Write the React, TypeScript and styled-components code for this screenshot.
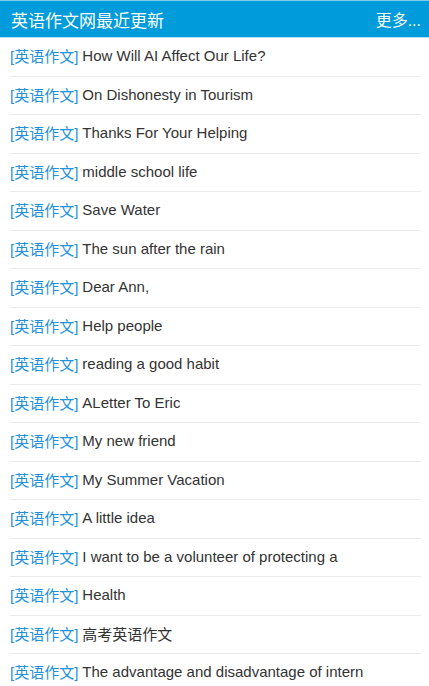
import styled, { createGlobalStyle } from 'styled-components';

const GlobalStyle = createGlobalStyle`
  html, body {
    margin: 0;
    padding: 0;
    background: #ffffff;
  }
  body {
    font-family: "Liberation Sans", "Noto Sans CJK SC", Arial, sans-serif;
  }
`;

const Page = styled.div`
  width: 429px;
  background: #ffffff;
`;

const Header = styled.div`
  display: flex;
  align-items: center;
  justify-content: space-between;
  height: 36px;
  padding: 0 8px 0 11px;
  background: #009bdb;
  border-top: 1px solid #7fcbee;
  border-bottom: 1px solid #b5e0f4;
  color: #ffffff;
`;

const Title = styled.h2`
  margin: 0;
  font-size: 17px;
  font-weight: normal;
`;

const More = styled.a`
  font-size: 16px;
  color: #ffffff;
  text-decoration: none;
`;

const List = styled.ul`
  list-style: none;
  margin: 0;
  padding: 0 8px 0 10px;
`;

const Item = styled.li`
  display: flex;
  align-items: center;
  box-sizing: border-box;
  height: 38.5px;
  padding-bottom: 2px;
  border-bottom: 1px solid #ececec;
  font-size: 15px;
  white-space: nowrap;
  overflow: hidden;
`;

const Tag = styled.span`
  color: #2191dc;
  margin-right: 4px;
`;

const Link = styled.a`
  color: #333333;
  text-decoration: none;
`;

const titles = [
  'How Will AI Affect Our Life?',
  'On Dishonesty in Tourism',
  'Thanks For Your Helping',
  'middle school life',
  'Save Water',
  'The sun after the rain',
  'Dear Ann,',
  'Help people',
  'reading a good habit',
  'ALetter To Eric',
  'My new friend',
  'My Summer Vacation',
  'A little idea',
  'I want to be a volunteer of protecting a',
  'Health',
  '高考英语作文',
  'The advantage and disadvantage of intern',
];

export default function App() {
  return (
    <Page>
      <GlobalStyle />
      <Header>
        <Title>英语作文网最近更新</Title>
        <More href="#">更多...</More>
      </Header>
      <List>
        {titles.map((t, i) => (
          <Item key={i}>
            <Tag>[英语作文]</Tag>
            <Link href="#">{t}</Link>
          </Item>
        ))}
      </List>
    </Page>
  );
}
